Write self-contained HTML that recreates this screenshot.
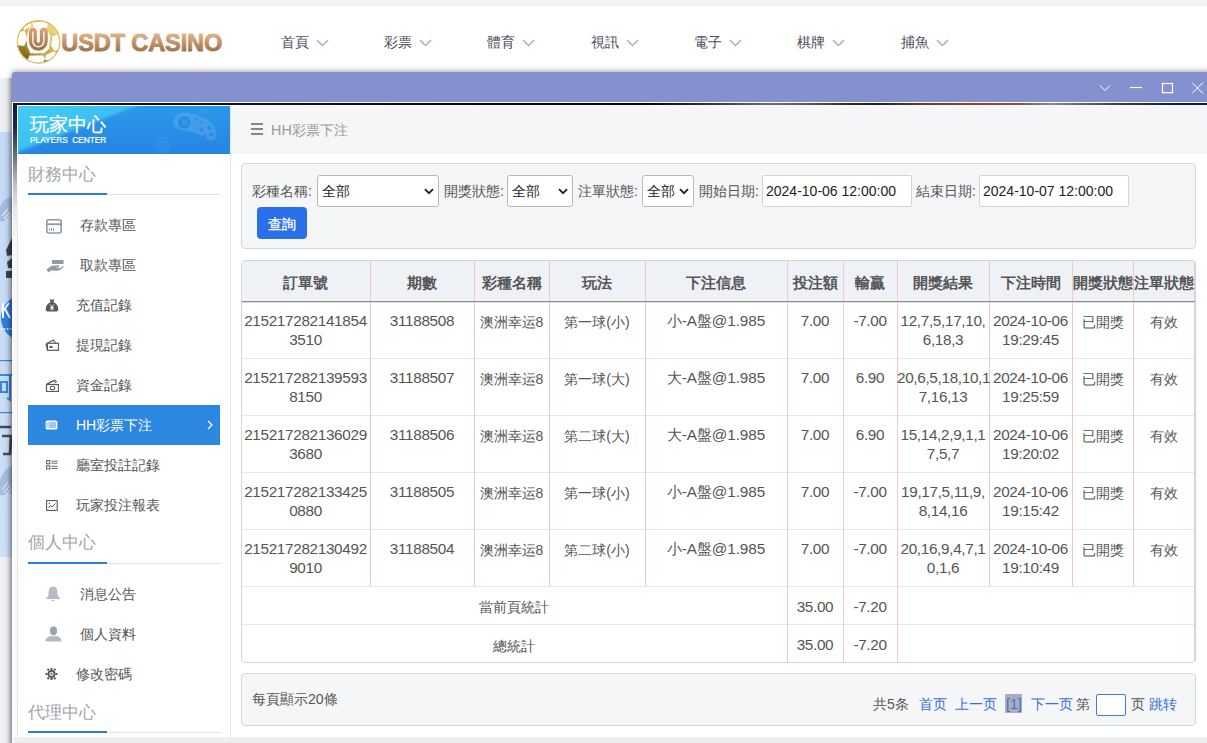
<!DOCTYPE html>
<html><head><meta charset="utf-8">
<style>
*{box-sizing:border-box;margin:0;padding:0}
html,body{width:1207px;height:743px;overflow:hidden;background:#f0f2f5;font-family:"Liberation Sans",sans-serif;color:#555}
.abs{position:absolute}
#top{left:0;top:0;width:1207px;height:6px;background:#f3f3f3}
#hdr{left:0;top:6px;width:1207px;height:72px;background:#fff;box-shadow:0 1px 3px rgba(0,0,0,.08)}
.nav{position:absolute;top:34px;font-size:14px;color:#4d4b5c;white-space:nowrap;line-height:16px}
.nav svg{position:absolute;left:35px;top:5px}
#bgl{left:0;top:78px;width:12px;height:665px;background:#f0f2f5}
#modal{left:12px;top:72px;width:1200px;height:680px;background:#fff;border-radius:2px 0 0 0;box-shadow:0 0 6px rgba(0,0,0,.48)}
#title{left:0;top:0;width:1200px;height:30px;background:#8591cf;border-radius:2px 0 0 0}
#frameTop{left:1px;top:31px;width:1200px;height:2px;background:linear-gradient(90deg,#0b1630 0px,#0a0f1c 287px,#050505 637px,#3c3c3c 707px,#707070 757px,#5a4a40 807px,#3a2414 837px,#0e2a2c 867px,#6a3c1e 907px,#8a4a22 967px,#7a5a48 1007px,#8a8a8a 1037px,#3a3a3a 1107px,#0a1e48 1167px,#0a2050 1207px)}
#frameLeft{left:1px;top:31px;width:4px;height:640px;background:linear-gradient(180deg,#0b1a3a 0%,#1d2b48 25px,#6e7686 55px,#b9bcc3 80px,#e6e6e8 105px,#f8f8f8 135px,#fafafa 100%)}
#frameLine{left:5px;top:33px;width:1px;height:640px;background:linear-gradient(180deg,#fff 0%,#fff 80px,#e4e4e4 130px,#e4e4e4 100%)}
#side{left:6px;top:34px;width:212px;height:631px;background:#fff}
#sideBorder{left:218px;top:33px;width:1px;height:632px;background:#e4e7ed}
#sh{left:0;top:0;width:212px;height:48px;background:linear-gradient(160deg,#43cdf3 0%,#35b2ee 25%,#2a95e8 55%,#2a86e2 100%)}
.sec{position:absolute;left:10px;width:192px;height:40px}
.sec .t{position:absolute;left:0;top:0;font-size:17px;color:#a4a4a4;line-height:20px}
.sec .ul{position:absolute;left:0;top:26px;width:192px;height:1px;background:#e2e2e2}
.sec .ulb{position:absolute;left:0;top:25px;width:79px;height:2px;background:#2a7de1}
.mi{position:absolute;left:10px;width:192px;height:40px;font-size:14px;color:#555;line-height:40px}
.mi .tx{position:absolute;top:0}
.mi svg{position:absolute}
.mi.act{background:#2c87e1;color:#fff}
#content{left:219px;top:33px;width:990px;height:632px;background:#fff}
#bc{left:0;top:0;width:990px;height:49px;background:#f5f6f8}
.card{position:absolute;background:#f5f6f8;border:1px solid #d8dbe0;border-radius:4px}
.lbl{position:absolute;font-size:14px;color:#555;line-height:16px;white-space:nowrap}
.sel{position:absolute;height:32px;background:#fff;border:1px solid #bdbdbd;border-radius:3px;font-size:14px;color:#222;line-height:30px;padding-left:4px;white-space:nowrap}
.sel svg{position:absolute;top:12px}
.inp{position:absolute;height:32px;background:#fff;border:1px solid #d4d4d4;border-radius:2px;font-size:14px;color:#222;line-height:30px;padding-left:4px;white-space:nowrap}
#btn{left:25px;top:44px;width:50px;height:32px;background:#2e71e8;border-radius:4px;color:#fff;font-size:14px;line-height:32px;text-align:center}
#tbl{left:10px;top:227px;width:955px;height:403px;border:1px solid #d8dbe0;border-radius:4px;overflow:hidden;background:#fff}
.pg{position:absolute;font-size:14px;line-height:16px;white-space:nowrap}
.bl{color:#3b6fd6}
#bottom{left:13px;top:737px;width:1194px;height:6px;background:#eeeeee}
</style></head><body>
<div id="top" class="abs"></div>
<div id="hdr" class="abs"></div>
<svg class="abs" style="left:14px;top:18px" width="50" height="50" viewBox="0 0 50 50">
<defs>
<linearGradient id="gold" x1="0.8" y1="0.1" x2="0.2" y2="0.9"><stop offset="0" stop-color="#efdc86"/><stop offset=".5" stop-color="#d2b34e"/><stop offset="1" stop-color="#7a5f1c"/></linearGradient>
<linearGradient id="brn" x1="0" y1="0" x2="0" y2="1"><stop offset="0" stop-color="#d9a987"/><stop offset="1" stop-color="#a97c58"/></linearGradient>
<clipPath id="cc"><circle cx="24.6" cy="23.8" r="21.6"/></clipPath>
</defs>
<circle cx="24.6" cy="23.8" r="21.6" fill="url(#gold)"/>
<g clip-path="url(#cc)" fill="#fffdf6">
<polygon points="18.2,4.4 33,3.7 33.7,9.1 26.9,11.1 19.5,9.8"/>
<polygon points="4,14.5 10.8,12.5 13.5,21.2 10.1,28 4,27.3 2,21.2"/>
<polygon points="38.4,18.5 43.8,16.5 47.5,22.6 46.8,31.3 40.4,32.7 37,27.3"/>
<polygon points="15.5,37.5 29.3,36.7 30.8,40.7 27.9,46.8 15.2,46.8 13.6,42.1"/>
<polygon points="31.6,36.7 40.4,33.3 43.1,36.7 37.7,42.8 31,42.1"/>
<polygon points="8.75,9.1 16.8,5.1 17.5,7.75 10.1,12.5"/>
<polygon points="15.5,9.1 31.6,8.5 36.4,17.9 35,30.6 30.3,35.4 16.5,35.4 13.2,28 13.2,15.8"/>
</g>
<circle cx="24.6" cy="23.8" r="21.2" fill="none" stroke="#d6bd62" stroke-width="1.1"/>
<linearGradient id="brn2" gradientUnits="userSpaceOnUse" x1="0" y1="9.8" x2="0" y2="32.8"><stop offset="0" stop-color="#dba57b"/><stop offset="1" stop-color="#9a6f48"/></linearGradient>
<path d="M18.9 13.8 V23.35 A5.45 5.45 0 0 0 29.8 23.35 V13.8" fill="none" stroke="url(#brn2)" stroke-width="7.9" stroke-linecap="round"/>
<path d="M18.9 13.5 V23.35 A5.45 5.45 0 0 0 29.8 23.35 V13.5" fill="none" stroke="#fbf3ea" stroke-width="1.5"/>
<text x="24.5" y="37.5" font-family="Liberation Sans" font-size="5" font-weight="700" fill="#c4a384" text-anchor="middle">casino</text>
</svg>
<svg class="abs" id="brand" style="left:58px;top:28px" width="175" height="28" viewBox="0 0 175 28"><defs><linearGradient id="bg1" gradientUnits="userSpaceOnUse" x1="0" y1="6" x2="0" y2="23"><stop offset="0" stop-color="#dfb28a"/><stop offset="0.5" stop-color="#c39268"/><stop offset="1" stop-color="#9f744d"/></linearGradient></defs><text x="3.3" y="23" font-family="Liberation Sans" font-weight="700" font-size="23.6" letter-spacing="-0.15" fill="url(#bg1)" stroke="url(#bg1)" stroke-width="0.9">USDT CASINO</text></svg>
<div class="nav" style="left:281px">首頁<svg width="13" height="8" viewBox="0 0 13 8"><path d="M1 1.2 L6.5 6.5 L12 1.2" fill="none" stroke="#a9b4d2" stroke-width="1.6"/></svg></div><div class="nav" style="left:384px">彩票<svg width="13" height="8" viewBox="0 0 13 8"><path d="M1 1.2 L6.5 6.5 L12 1.2" fill="none" stroke="#a9b4d2" stroke-width="1.6"/></svg></div><div class="nav" style="left:487px">體育<svg width="13" height="8" viewBox="0 0 13 8"><path d="M1 1.2 L6.5 6.5 L12 1.2" fill="none" stroke="#a9b4d2" stroke-width="1.6"/></svg></div><div class="nav" style="left:591px">視訊<svg width="13" height="8" viewBox="0 0 13 8"><path d="M1 1.2 L6.5 6.5 L12 1.2" fill="none" stroke="#a9b4d2" stroke-width="1.6"/></svg></div><div class="nav" style="left:694px">電子<svg width="13" height="8" viewBox="0 0 13 8"><path d="M1 1.2 L6.5 6.5 L12 1.2" fill="none" stroke="#a9b4d2" stroke-width="1.6"/></svg></div><div class="nav" style="left:797px">棋牌<svg width="13" height="8" viewBox="0 0 13 8"><path d="M1 1.2 L6.5 6.5 L12 1.2" fill="none" stroke="#a9b4d2" stroke-width="1.6"/></svg></div><div class="nav" style="left:901px">捕魚<svg width="13" height="8" viewBox="0 0 13 8"><path d="M1 1.2 L6.5 6.5 L12 1.2" fill="none" stroke="#a9b4d2" stroke-width="1.6"/></svg></div>
<div id="bgl" class="abs"></div>
<svg class="abs" style="left:0;top:78px" width="12" height="665" viewBox="0 78 12 665">
<defs>
<linearGradient id="lbg" x1="0" y1="0" x2="0" y2="1"><stop offset="0" stop-color="#c4daf6"/><stop offset="1" stop-color="#cfe1f8"/></linearGradient>
<linearGradient id="shd" x1="0" y1="0" x2="1" y2="0"><stop offset="0" stop-color="#000" stop-opacity="0"/><stop offset="0.6" stop-color="#000" stop-opacity="0.03"/><stop offset="1" stop-color="#000" stop-opacity="0.22"/></linearGradient>
</defs>
<rect x="0" y="78" width="12" height="54" fill="#eef0f4"/>
<rect x="0" y="132" width="12" height="425" fill="url(#lbg)"/>
<rect x="0" y="557" width="12" height="186" fill="#f0f2f6"/>
<g fill="#9db8de" opacity="0.85">
<path d="M0 206 Q4 198 12 197 L12 218 Q6 222 0 221 Z"/>
<path d="M0 480 Q4 468 12 466 L12 492 Q6 496 0 495 Z"/>
</g>
<g stroke="#eaf2fc" stroke-width="1.2" opacity="0.9">
<path d="M2 216 L8 209 M4 219 L10 212 M6 221 L12 214"/>
<path d="M2 490 L8 482 M4 493 L10 485 M6 495 L12 488"/>
</g>
<g fill="#3e4552">
<path d="M12 238 L6 250 L7 256 L12 255 Z"/>
<path d="M12 258 L7 262 L8 268 L12 268 Z"/>
<rect x="6" y="271" width="6" height="7"/>
</g>
<circle cx="24" cy="318" r="23" fill="#2f80e0"/>
<path d="M3 303 V318 M3 311 L9 303 M5 309 L10 318" stroke="#fff" stroke-width="2" fill="none"/>
<path d="M1 329 H12" stroke="#fff" stroke-width="1.5" stroke-dasharray="1.5 1.5"/>
<rect x="0" y="360" width="12" height="1.2" fill="#3b86e0"/>
<rect x="0" y="412" width="12" height="1.2" fill="#3b86e0"/>
<path d="M0 375 H12 M10 375 V400 L7 398 M1 382 H7 V392 H1 Z" fill="none" stroke="#3b86e0" stroke-width="2"/>
<path d="M0 427 H11 M2 436 H11 L10 454 H3" fill="none" stroke="#444b56" stroke-width="2.6"/>
<rect x="0" y="78" width="12" height="665" fill="url(#shd)"/>
</svg>

<div id="modal" class="abs">
  <div id="title" class="abs"><svg class="abs" style="left:1087px;top:10px" width="120" height="14" viewBox="0 0 120 14">
<path d="M0.8 3.3 L6 8.5 L11.2 3.3" fill="none" stroke="#fff" stroke-width="1"/>
<path d="M31 5.5 H43" stroke="#fff" stroke-width="1.2"/>
<rect x="63.5" y="1.5" width="10" height="9.2" fill="none" stroke="#fff" stroke-width="1.2"/>
<path d="M93 0.5 L104 11.5 M104 0.5 L93 11.5" stroke="#fff" stroke-width="1"/>
</svg></div>
  <div id="frameTop" class="abs"></div>
  <div id="frameLeft" class="abs"></div><div id="frameLine" class="abs"></div>
  <div id="side" class="abs">
    <svg id="sh" class="abs" width="212" height="48" viewBox="0 0 212 48" style="background:none">
<defs>
<linearGradient id="shb" x1="0" y1="0" x2="0" y2="1"><stop offset="0" stop-color="#2b98ea"/><stop offset="1" stop-color="#2585e2"/></linearGradient>
<linearGradient id="shc" x1="0" y1="0" x2="1" y2="1"><stop offset="0" stop-color="#45cef4"/><stop offset="1" stop-color="#34b0ee"/></linearGradient>
<filter id="bl1" x="-20%" y="-20%" width="140%" height="140%"><feGaussianBlur stdDeviation="1.6"/></filter>
</defs>
<rect width="212" height="48" fill="url(#shb)"/>
<polygon points="-6,-6 122,-6 118,0 0,46 -6,52" fill="url(#shc)" filter="url(#bl1)"/>
<g opacity="0.12" fill="#fff">
<path d="M157 12 Q162 5 172 7 L186 12 Q196 16 198 26 Q199 33 194 34 Q188 34 182 29 L170 25 Q160 24 156 20 Q154 16 157 12 Z"/>
<path d="M182 7 Q185 3 189 4 Q186 7 188 8" stroke="#fff" fill="none" stroke-width="1"/>
<circle cx="144.5" cy="39" r="8.5" opacity="0.3"/>
</g>
<circle cx="166.3" cy="16.2" r="6.3" fill="#1e7cdc" opacity="0.6"/>
<path d="M163.3 13.2 L169.3 19.2 M169.3 13.2 L163.3 19.2" stroke="#3c9fec" stroke-width="1.6" opacity="0.8"/>
<g fill="#1e7cdc" opacity="0.5"><circle cx="183.7" cy="24" r="2.1"/><circle cx="191.4" cy="21.9" r="2.1"/><circle cx="186.4" cy="30.4" r="2.1"/><circle cx="193.2" cy="28.5" r="2.1"/></g>
<path d="M176.5 12 L179.5 13.8 M181.5 15.2 L184.5 17" stroke="#1e7cdc" stroke-width="1.5" opacity="0.5"/>
</svg>
<div class="abs" style="left:12px;top:9px;font-size:19px;color:#fff;line-height:20px;white-space:nowrap;-webkit-text-stroke:0.25px #fff">玩家中心</div><div class="abs" style="left:12px;top:29px;font-size:8.4px;color:#fff;line-height:10px;letter-spacing:-0.05px;-webkit-text-stroke:0.2px #fff;white-space:nowrap">PLAYERS&nbsp; CENTER</div><div class="abs" style="left:10px;top:59px;font-size:17px;color:#a2a6ab;line-height:20px;white-space:nowrap">財務中心</div><div class="abs" style="left:10px;top:88px;width:192px;height:1px;background:#e2e2e2"></div><div class="abs" style="left:10px;top:87px;width:79px;height:2px;background:#2a7de1"></div><div class="abs" style="left:10px;top:427px;font-size:17px;color:#a2a6ab;line-height:20px;white-space:nowrap">個人中心</div><div class="abs" style="left:10px;top:457px;width:192px;height:1px;background:#e2e2e2"></div><div class="abs" style="left:10px;top:456px;width:79px;height:2px;background:#2a7de1"></div><div class="abs" style="left:10px;top:597px;font-size:17px;color:#a2a6ab;line-height:20px;white-space:nowrap">代理中心</div><div class="abs" style="left:10px;top:626px;width:192px;height:1px;background:#e2e2e2"></div><div class="abs" style="left:10px;top:625px;width:79px;height:2px;background:#2a7de1"></div><div class="abs" style="left:62px;top:99px;font-size:14px;line-height:40px;color:#555;white-space:nowrap">存款專區</div><div class="abs" style="left:28px;top:112.5px;line-height:0"><svg width="16" height="15" viewBox="0 0 16 15"><rect x="0.8" y="0.8" width="14.4" height="13.2" rx="2" fill="none" stroke="#8f9aa3" stroke-width="1.6"/><rect x="0.8" y="4.3" width="14.4" height="1.8" fill="#8f9aa3"/><path d="M3.5 9.2v2.6M5.5 9.2v2.6M7.5 9.2v2.6" stroke="#8f9aa3" stroke-width="1"/></svg></div><div class="abs" style="left:62px;top:139px;font-size:14px;line-height:40px;color:#555;white-space:nowrap">取款專區</div><div class="abs" style="left:26.5px;top:154px;line-height:0"><svg width="19" height="13" viewBox="0 0 19 13"><rect x="7" y="0" width="11.5" height="4" fill="#8f9aa3"/><path d="M1.5 9.5 L5.5 6.5 Q7 5.5 9 5.5 L14 5.5 Q15 6.3 14 7.2 L10 7.6 L15 8.2 L18.5 5.8 Q18.8 6.8 18 7.6 L15 10 Q13.5 10.8 11.5 10.8 L6 10.6 L3.5 12.5 Z" fill="#8f9aa3"/></svg></div><div class="abs" style="left:58px;top:179px;font-size:14px;line-height:40px;color:#555;white-space:nowrap">充值記錄</div><div class="abs" style="left:27px;top:192.5px;line-height:0"><svg width="14" height="13" viewBox="0 0 14 13"><path d="M4.5 0.5 L9.5 0.5 L8.3 3 Q13 5 13.3 10 Q13.3 12.6 10.5 12.6 L3.5 12.6 Q0.7 12.6 0.7 10 Q1 5 5.7 3 Z" fill="#5a5a5a"/><path d="M5 5.5 L7 8 L9 5.5 M7 8 V11 M5.3 8.5 H8.7 M5.3 10 H8.7" stroke="#fff" stroke-width="0.9" fill="none"/></svg></div><div class="abs" style="left:58px;top:219px;font-size:14px;line-height:40px;color:#555;white-space:nowrap">提現記錄</div><div class="abs" style="left:27px;top:232.5px;line-height:0"><svg width="14" height="12" viewBox="0 0 14 12"><path d="M1 5 L8.5 1 L10.5 4" fill="none" stroke="#5a5a5a" stroke-width="1.1"/><rect x="2.5" y="4.3" width="11" height="7" fill="none" stroke="#5a5a5a" stroke-width="1.2"/><rect x="4.5" y="7" width="3" height="2" fill="#5a5a5a"/><path d="M1 5 L2.5 11.3" stroke="#5a5a5a" stroke-width="1.1"/></svg></div><div class="abs" style="left:58px;top:259px;font-size:14px;line-height:40px;color:#555;white-space:nowrap">資金記錄</div><div class="abs" style="left:27px;top:272.5px;line-height:0"><svg width="14" height="13" viewBox="0 0 14 13"><path d="M1 6 L9 1.5 L11 4" fill="none" stroke="#5a5a5a" stroke-width="1.1"/><path d="M1.5 4.8 L10 1 L12 3" fill="none" stroke="#5a5a5a" stroke-width="0.9"/><rect x="1.5" y="5.5" width="12" height="7" fill="none" stroke="#5a5a5a" stroke-width="1.2"/><ellipse cx="7.5" cy="9" rx="2.2" ry="1.8" fill="none" stroke="#5a5a5a" stroke-width="1.1"/></svg></div><div class="abs" style="left:10px;top:299px;width:192px;height:40px;background:#2c87e1"></div><svg class="abs" style="left:189px;top:314px" width="7" height="10" viewBox="0 0 7 10"><path d="M1 1 L5 5 L1 9" fill="none" stroke="#fff" stroke-width="1.2"/></svg><div class="abs" style="left:58px;top:299px;font-size:14px;line-height:40px;color:#fff;white-space:nowrap">HH彩票下注</div><div class="abs" style="left:27px;top:314px;line-height:0"><svg width="13" height="10" viewBox="0 0 13 10"><rect x="0.6" y="0.6" width="11.8" height="8.8" rx="1.5" fill="#fff"/><path d="M3.5 3 H11 M3.5 5 H11 M3.5 7 H11" stroke="#2c87e1" stroke-width="0.9"/><path d="M2 2.5 V7.5" stroke="#2c87e1" stroke-width="0.6"/></svg></div><div class="abs" style="left:58px;top:339px;font-size:14px;line-height:40px;color:#555;white-space:nowrap">廳室投註記錄</div><div class="abs" style="left:28px;top:354px;line-height:0"><svg width="12" height="10" viewBox="0 0 12 10"><rect x="0.6" y="0.6" width="3.2" height="3.2" fill="none" stroke="#5a5a5a" stroke-width="1"/><rect x="0.6" y="5.8" width="3.2" height="3.2" fill="none" stroke="#5a5a5a" stroke-width="1"/><path d="M5.5 1.2 H11.5 M5.5 3.2 H11.5 M5.5 6.3 H11.5 M5.5 8.5 H11.5" stroke="#5a5a5a" stroke-width="0.9"/></svg></div><div class="abs" style="left:58px;top:379px;font-size:14px;line-height:40px;color:#555;white-space:nowrap">玩家投注報表</div><div class="abs" style="left:28px;top:393.5px;line-height:0"><svg width="12" height="11" viewBox="0 0 12 11"><rect x="0.6" y="0.6" width="10.6" height="9.8" fill="none" stroke="#5a5a5a" stroke-width="1.1"/><path d="M2.5 8 L4.5 5.5 L6 7 L9.5 3.5" fill="none" stroke="#5a5a5a" stroke-width="1"/><circle cx="3.3" cy="3.3" r="0.8" fill="#5a5a5a"/></svg></div><div class="abs" style="left:62px;top:468px;font-size:14px;line-height:40px;color:#555;white-space:nowrap">消息公告</div><div class="abs" style="left:26.5px;top:479.5px;line-height:0"><svg width="16" height="16" viewBox="0 0 16 16"><path d="M8 0.5 Q12 0.5 12.3 5 L12.5 9.5 L15.5 13 L0.5 13 L3.5 9.5 L3.7 5 Q4 0.5 8 0.5 Z" fill="#b5bcc3"/><path d="M6.5 14.5 H9.5" stroke="#b5bcc3" stroke-width="1.2"/></svg></div><div class="abs" style="left:62px;top:508px;font-size:14px;line-height:40px;color:#555;white-space:nowrap">個人資料</div><div class="abs" style="left:27px;top:519.5px;line-height:0"><svg width="17" height="16" viewBox="0 0 17 16"><ellipse cx="8.5" cy="4.8" rx="3.6" ry="4.4" fill="#9aa3ab"/><path d="M0.5 15.5 Q0.7 11.5 4 10.6 L6.5 9.8 Q8.5 11 10.5 9.8 L13 10.6 Q16.3 11.5 16.5 15.5 Z" fill="#b3bac1"/></svg></div><div class="abs" style="left:58px;top:548px;font-size:14px;line-height:40px;color:#555;white-space:nowrap">修改密碼</div><div class="abs" style="left:27px;top:562px;line-height:0"><svg width="13" height="12" viewBox="0 0 13 12"><g fill="#5a5a5a"><circle cx="6.5" cy="6" r="4"/><path d="M5.5 0 H7.5 V2 H5.5Z M5.5 10 H7.5 V12 H5.5Z M0.5 5 V7 H2.5 V5Z M10.5 5 V7 H12.5 V5Z"/><path d="M1.8 1.5 L3.2 0.2 L4.6 1.6 L3.2 3Z M8.4 10.4 L9.8 9 L11.2 10.4 L9.8 11.8Z M1.8 10.5 L3.2 9 L4.6 10.4 L3.2 11.8Z M8.4 1.6 L9.8 0.2 L11.2 1.6 L9.8 3Z"/></g><circle cx="6.5" cy="6" r="2.1" fill="#fff"/><circle cx="6.5" cy="6" r="1" fill="#5a5a5a"/></svg></div>
  </div>
  <div id="sideBorder" class="abs"></div>
  <div id="content" class="abs">
    <div id="bc" class="abs"></div>
  </div>
</div>
<!--CONTENT-->
<svg class="abs" style="left:251px;top:123px" width="13" height="13" viewBox="0 0 13 13"><path d="M0 1 H12 M0 6 H12 M0 11 H12" stroke="#878787" stroke-width="1.9"/></svg>
<div class="abs" style="left:271px;top:121px;font-size:14.4px;line-height:18.4px;color:#999;font-weight:400;white-space:nowrap;">HH彩票下注</div>
<div class="abs" style="left:241px;top:163px;width:955px;height:86px;background:#f5f6f8;border:1px solid #d3d7dc;border-radius:4px"></div>
<div class="abs" style="left:252px;top:182px;font-size:14px;line-height:18px;color:#555;font-weight:400;white-space:nowrap;">彩種名稱:</div>
<div class="abs" style="left:317px;top:175px;width:122px;height:32px;background:#fff;border:1px solid #b9b9b9;border-radius:3px"></div><div class="abs" style="left:322px;top:182px;font-size:14px;line-height:18px;color:#222;font-weight:400;white-space:nowrap;">全部</div><svg class="abs" style="left:424px;top:188px" width="10" height="7" viewBox="0 0 10 7"><path d="M1 1.2 L5 5.2 L9 1.2" fill="none" stroke="#222" stroke-width="1.8"/></svg>
<div class="abs" style="left:444px;top:182px;font-size:14px;line-height:18px;color:#555;font-weight:400;white-space:nowrap;">開獎狀態:</div>
<div class="abs" style="left:507px;top:175px;width:66px;height:32px;background:#fff;border:1px solid #b9b9b9;border-radius:3px"></div><div class="abs" style="left:512px;top:182px;font-size:14px;line-height:18px;color:#222;font-weight:400;white-space:nowrap;">全部</div><svg class="abs" style="left:558px;top:188px" width="10" height="7" viewBox="0 0 10 7"><path d="M1 1.2 L5 5.2 L9 1.2" fill="none" stroke="#222" stroke-width="1.8"/></svg>
<div class="abs" style="left:578px;top:182px;font-size:14px;line-height:18px;color:#555;font-weight:400;white-space:nowrap;">注單狀態:</div>
<div class="abs" style="left:642px;top:175px;width:52px;height:32px;background:#fff;border:1px solid #b9b9b9;border-radius:3px"></div><div class="abs" style="left:647px;top:182px;font-size:14px;line-height:18px;color:#222;font-weight:400;white-space:nowrap;">全部</div><svg class="abs" style="left:679px;top:188px" width="10" height="7" viewBox="0 0 10 7"><path d="M1 1.2 L5 5.2 L9 1.2" fill="none" stroke="#222" stroke-width="1.8"/></svg>
<div class="abs" style="left:699px;top:182px;font-size:14px;line-height:18px;color:#555;font-weight:400;white-space:nowrap;">開始日期:</div>
<div class="abs" style="left:762px;top:175px;width:150px;height:32px;background:#fff;border:1px solid #d4d4d4;border-radius:2px"></div><div class="abs" style="left:766px;top:182px;font-size:14px;line-height:18px;color:#222;font-weight:400;white-space:nowrap;">2024-10-06 12:00:00</div>
<div class="abs" style="left:916px;top:182px;font-size:14px;line-height:18px;color:#555;font-weight:400;white-space:nowrap;">結束日期:</div>
<div class="abs" style="left:979px;top:175px;width:150px;height:32px;background:#fff;border:1px solid #d4d4d4;border-radius:2px"></div><div class="abs" style="left:983px;top:182px;font-size:14px;line-height:18px;color:#222;font-weight:400;white-space:nowrap;">2024-10-07 12:00:00</div>
<div class="abs" style="left:257px;top:207px;width:50px;height:32px;background:#2b70eb;border-radius:4px"></div>
<div class="abs" style="left:257px;top:214.5px;width:50px;text-align:center;font-size:14px;line-height:18px;color:#fff;font-weight:400;white-space:nowrap;-webkit-text-stroke:0.3px #fff;">查詢</div>
<div class="abs" style="left:241px;top:260px;width:955px;height:403px;background:#fff;border:1px solid #d3d7dc;border-radius:4px;overflow:hidden"><div class="abs" style="left:0;top:0;width:955px;height:41px;background:#eef1f5"></div><div class="abs" style="left:0;top:40px;width:955px;height:1px;background:#958d8c"></div><div class="abs" style="left:0;top:41px;width:955px;height:1px;background:#ddd9d9"></div></div>
<div class="abs" style="left:242px;top:358px;width:953px;height:1px;background:#e6e6e6"></div>
<div class="abs" style="left:242px;top:415px;width:953px;height:1px;background:#e6e6e6"></div>
<div class="abs" style="left:242px;top:472px;width:953px;height:1px;background:#e6e6e6"></div>
<div class="abs" style="left:242px;top:529px;width:953px;height:1px;background:#e6e6e6"></div>
<div class="abs" style="left:242px;top:586px;width:953px;height:1px;background:#e6e6e6"></div>
<div class="abs" style="left:242px;top:624px;width:953px;height:1px;background:#e6e6e6"></div>
<div class="abs" style="left:370px;top:261px;width:1px;height:325px;background:#f0caca"></div>
<div class="abs" style="left:474px;top:261px;width:1px;height:325px;background:#f0caca"></div>
<div class="abs" style="left:549px;top:261px;width:1px;height:325px;background:#f0caca"></div>
<div class="abs" style="left:645px;top:261px;width:1px;height:325px;background:#f0caca"></div>
<div class="abs" style="left:787px;top:261px;width:1px;height:401px;background:#f0caca"></div>
<div class="abs" style="left:843px;top:261px;width:1px;height:401px;background:#f0caca"></div>
<div class="abs" style="left:897px;top:261px;width:1px;height:401px;background:#f0caca"></div>
<div class="abs" style="left:989px;top:261px;width:1px;height:325px;background:#f0caca"></div>
<div class="abs" style="left:1072px;top:261px;width:1px;height:325px;background:#f0caca"></div>
<div class="abs" style="left:1133px;top:261px;width:1px;height:325px;background:#f0caca"></div>
<div class="abs" style="left:1194px;top:261px;width:1px;height:401px;background:#f0caca"></div>
<div class="abs" style="left:242px;top:301px;width:953px;height:1px;background:#958d8c"></div><div class="abs" style="left:242px;top:302px;width:953px;height:1px;background:#ddd9d9"></div>
<div class="abs" style="left:241px;top:273px;width:129px;text-align:center;font-size:15px;line-height:20px;color:#555;font-weight:700;white-space:nowrap;">訂單號</div>
<div class="abs" style="left:370px;top:273px;width:104px;text-align:center;font-size:15px;line-height:20px;color:#555;font-weight:700;white-space:nowrap;">期數</div>
<div class="abs" style="left:474px;top:273px;width:75px;text-align:center;font-size:15px;line-height:20px;color:#555;font-weight:700;white-space:nowrap;">彩種名稱</div>
<div class="abs" style="left:549px;top:273px;width:96px;text-align:center;font-size:15px;line-height:20px;color:#555;font-weight:700;white-space:nowrap;">玩法</div>
<div class="abs" style="left:645px;top:273px;width:142px;text-align:center;font-size:15px;line-height:20px;color:#555;font-weight:700;white-space:nowrap;">下注信息</div>
<div class="abs" style="left:787px;top:273px;width:56px;text-align:center;font-size:15px;line-height:20px;color:#555;font-weight:700;white-space:nowrap;">投注額</div>
<div class="abs" style="left:843px;top:273px;width:54px;text-align:center;font-size:15px;line-height:20px;color:#555;font-weight:700;white-space:nowrap;">輸贏</div>
<div class="abs" style="left:897px;top:273px;width:92px;text-align:center;font-size:15px;line-height:20px;color:#555;font-weight:700;white-space:nowrap;">開獎結果</div>
<div class="abs" style="left:989px;top:273px;width:83px;text-align:center;font-size:15px;line-height:20px;color:#555;font-weight:700;white-space:nowrap;">下注時間</div>
<div class="abs" style="left:1072px;top:273px;width:61px;text-align:center;font-size:15px;line-height:20px;color:#555;font-weight:700;white-space:nowrap;">開獎狀態</div>
<div class="abs" style="left:1133px;top:273px;width:62px;text-align:center;font-size:15px;line-height:20px;color:#555;font-weight:700;white-space:nowrap;">注單狀態</div>
<div class="abs" style="left:241px;top:311px;width:129px;text-align:center;font-size:15.3px;line-height:19px;color:#555;font-weight:400;white-space:nowrap;letter-spacing:-0.33px;">215217282141854<br>3510</div>
<div class="abs" style="left:370px;top:311px;width:104px;text-align:center;font-size:15.3px;line-height:19px;color:#555;font-weight:400;white-space:nowrap;letter-spacing:-0.33px;">31188508</div>
<div class="abs" style="left:474px;top:313px;width:75px;text-align:center;font-size:14px;line-height:19px;color:#555;font-weight:400;white-space:nowrap;">澳洲幸运8</div>
<div class="abs" style="left:549px;top:313px;width:96px;text-align:center;font-size:14px;line-height:19px;color:#555;font-weight:400;white-space:nowrap;">第一球(小)</div>
<div class="abs" style="left:645px;top:311px;width:142px;text-align:center;font-size:15.3px;line-height:19px;color:#555;font-weight:400;white-space:nowrap;letter-spacing:-0.1px;">小-A盤@1.985</div>
<div class="abs" style="left:787px;top:311px;width:56px;text-align:center;font-size:15.3px;line-height:19px;color:#555;font-weight:400;white-space:nowrap;letter-spacing:-0.33px;">7.00</div>
<div class="abs" style="left:843px;top:311px;width:54px;text-align:center;font-size:15.3px;line-height:19px;color:#555;font-weight:400;white-space:nowrap;letter-spacing:-0.33px;">-7.00</div>
<div class="abs" style="left:897px;top:311px;width:92px;text-align:center;font-size:15.3px;line-height:19px;color:#555;font-weight:400;white-space:nowrap;letter-spacing:-0.33px;">12,7,5,17,10,<br>6,18,3</div>
<div class="abs" style="left:989px;top:311px;width:83px;text-align:center;font-size:15.3px;line-height:19px;color:#555;font-weight:400;white-space:nowrap;letter-spacing:-0.33px;">2024-10-06<br>19:29:45</div>
<div class="abs" style="left:1072px;top:313px;width:61px;text-align:center;font-size:14px;line-height:19px;color:#555;font-weight:400;white-space:nowrap;">已開獎</div>
<div class="abs" style="left:1133px;top:313px;width:62px;text-align:center;font-size:14px;line-height:19px;color:#555;font-weight:400;white-space:nowrap;">有效</div>
<div class="abs" style="left:241px;top:368px;width:129px;text-align:center;font-size:15.3px;line-height:19px;color:#555;font-weight:400;white-space:nowrap;letter-spacing:-0.33px;">215217282139593<br>8150</div>
<div class="abs" style="left:370px;top:368px;width:104px;text-align:center;font-size:15.3px;line-height:19px;color:#555;font-weight:400;white-space:nowrap;letter-spacing:-0.33px;">31188507</div>
<div class="abs" style="left:474px;top:370px;width:75px;text-align:center;font-size:14px;line-height:19px;color:#555;font-weight:400;white-space:nowrap;">澳洲幸运8</div>
<div class="abs" style="left:549px;top:370px;width:96px;text-align:center;font-size:14px;line-height:19px;color:#555;font-weight:400;white-space:nowrap;">第一球(大)</div>
<div class="abs" style="left:645px;top:368px;width:142px;text-align:center;font-size:15.3px;line-height:19px;color:#555;font-weight:400;white-space:nowrap;letter-spacing:-0.1px;">大-A盤@1.985</div>
<div class="abs" style="left:787px;top:368px;width:56px;text-align:center;font-size:15.3px;line-height:19px;color:#555;font-weight:400;white-space:nowrap;letter-spacing:-0.33px;">7.00</div>
<div class="abs" style="left:843px;top:368px;width:54px;text-align:center;font-size:15.3px;line-height:19px;color:#555;font-weight:400;white-space:nowrap;letter-spacing:-0.33px;">6.90</div>
<div class="abs" style="left:897px;top:368px;width:92px;text-align:center;font-size:15.3px;line-height:19px;color:#555;font-weight:400;white-space:nowrap;letter-spacing:-0.33px;">20,6,5,18,10,1<br>7,16,13</div>
<div class="abs" style="left:989px;top:368px;width:83px;text-align:center;font-size:15.3px;line-height:19px;color:#555;font-weight:400;white-space:nowrap;letter-spacing:-0.33px;">2024-10-06<br>19:25:59</div>
<div class="abs" style="left:1072px;top:370px;width:61px;text-align:center;font-size:14px;line-height:19px;color:#555;font-weight:400;white-space:nowrap;">已開獎</div>
<div class="abs" style="left:1133px;top:370px;width:62px;text-align:center;font-size:14px;line-height:19px;color:#555;font-weight:400;white-space:nowrap;">有效</div>
<div class="abs" style="left:241px;top:425px;width:129px;text-align:center;font-size:15.3px;line-height:19px;color:#555;font-weight:400;white-space:nowrap;letter-spacing:-0.33px;">215217282136029<br>3680</div>
<div class="abs" style="left:370px;top:425px;width:104px;text-align:center;font-size:15.3px;line-height:19px;color:#555;font-weight:400;white-space:nowrap;letter-spacing:-0.33px;">31188506</div>
<div class="abs" style="left:474px;top:427px;width:75px;text-align:center;font-size:14px;line-height:19px;color:#555;font-weight:400;white-space:nowrap;">澳洲幸运8</div>
<div class="abs" style="left:549px;top:427px;width:96px;text-align:center;font-size:14px;line-height:19px;color:#555;font-weight:400;white-space:nowrap;">第二球(大)</div>
<div class="abs" style="left:645px;top:425px;width:142px;text-align:center;font-size:15.3px;line-height:19px;color:#555;font-weight:400;white-space:nowrap;letter-spacing:-0.1px;">大-A盤@1.985</div>
<div class="abs" style="left:787px;top:425px;width:56px;text-align:center;font-size:15.3px;line-height:19px;color:#555;font-weight:400;white-space:nowrap;letter-spacing:-0.33px;">7.00</div>
<div class="abs" style="left:843px;top:425px;width:54px;text-align:center;font-size:15.3px;line-height:19px;color:#555;font-weight:400;white-space:nowrap;letter-spacing:-0.33px;">6.90</div>
<div class="abs" style="left:897px;top:425px;width:92px;text-align:center;font-size:15.3px;line-height:19px;color:#555;font-weight:400;white-space:nowrap;letter-spacing:-0.33px;">15,14,2,9,1,1<br>7,5,7</div>
<div class="abs" style="left:989px;top:425px;width:83px;text-align:center;font-size:15.3px;line-height:19px;color:#555;font-weight:400;white-space:nowrap;letter-spacing:-0.33px;">2024-10-06<br>19:20:02</div>
<div class="abs" style="left:1072px;top:427px;width:61px;text-align:center;font-size:14px;line-height:19px;color:#555;font-weight:400;white-space:nowrap;">已開獎</div>
<div class="abs" style="left:1133px;top:427px;width:62px;text-align:center;font-size:14px;line-height:19px;color:#555;font-weight:400;white-space:nowrap;">有效</div>
<div class="abs" style="left:241px;top:482px;width:129px;text-align:center;font-size:15.3px;line-height:19px;color:#555;font-weight:400;white-space:nowrap;letter-spacing:-0.33px;">215217282133425<br>0880</div>
<div class="abs" style="left:370px;top:482px;width:104px;text-align:center;font-size:15.3px;line-height:19px;color:#555;font-weight:400;white-space:nowrap;letter-spacing:-0.33px;">31188505</div>
<div class="abs" style="left:474px;top:484px;width:75px;text-align:center;font-size:14px;line-height:19px;color:#555;font-weight:400;white-space:nowrap;">澳洲幸运8</div>
<div class="abs" style="left:549px;top:484px;width:96px;text-align:center;font-size:14px;line-height:19px;color:#555;font-weight:400;white-space:nowrap;">第一球(小)</div>
<div class="abs" style="left:645px;top:482px;width:142px;text-align:center;font-size:15.3px;line-height:19px;color:#555;font-weight:400;white-space:nowrap;letter-spacing:-0.1px;">小-A盤@1.985</div>
<div class="abs" style="left:787px;top:482px;width:56px;text-align:center;font-size:15.3px;line-height:19px;color:#555;font-weight:400;white-space:nowrap;letter-spacing:-0.33px;">7.00</div>
<div class="abs" style="left:843px;top:482px;width:54px;text-align:center;font-size:15.3px;line-height:19px;color:#555;font-weight:400;white-space:nowrap;letter-spacing:-0.33px;">-7.00</div>
<div class="abs" style="left:897px;top:482px;width:92px;text-align:center;font-size:15.3px;line-height:19px;color:#555;font-weight:400;white-space:nowrap;letter-spacing:-0.33px;">19,17,5,11,9,<br>8,14,16</div>
<div class="abs" style="left:989px;top:482px;width:83px;text-align:center;font-size:15.3px;line-height:19px;color:#555;font-weight:400;white-space:nowrap;letter-spacing:-0.33px;">2024-10-06<br>19:15:42</div>
<div class="abs" style="left:1072px;top:484px;width:61px;text-align:center;font-size:14px;line-height:19px;color:#555;font-weight:400;white-space:nowrap;">已開獎</div>
<div class="abs" style="left:1133px;top:484px;width:62px;text-align:center;font-size:14px;line-height:19px;color:#555;font-weight:400;white-space:nowrap;">有效</div>
<div class="abs" style="left:241px;top:539px;width:129px;text-align:center;font-size:15.3px;line-height:19px;color:#555;font-weight:400;white-space:nowrap;letter-spacing:-0.33px;">215217282130492<br>9010</div>
<div class="abs" style="left:370px;top:539px;width:104px;text-align:center;font-size:15.3px;line-height:19px;color:#555;font-weight:400;white-space:nowrap;letter-spacing:-0.33px;">31188504</div>
<div class="abs" style="left:474px;top:541px;width:75px;text-align:center;font-size:14px;line-height:19px;color:#555;font-weight:400;white-space:nowrap;">澳洲幸运8</div>
<div class="abs" style="left:549px;top:541px;width:96px;text-align:center;font-size:14px;line-height:19px;color:#555;font-weight:400;white-space:nowrap;">第二球(小)</div>
<div class="abs" style="left:645px;top:539px;width:142px;text-align:center;font-size:15.3px;line-height:19px;color:#555;font-weight:400;white-space:nowrap;letter-spacing:-0.1px;">小-A盤@1.985</div>
<div class="abs" style="left:787px;top:539px;width:56px;text-align:center;font-size:15.3px;line-height:19px;color:#555;font-weight:400;white-space:nowrap;letter-spacing:-0.33px;">7.00</div>
<div class="abs" style="left:843px;top:539px;width:54px;text-align:center;font-size:15.3px;line-height:19px;color:#555;font-weight:400;white-space:nowrap;letter-spacing:-0.33px;">-7.00</div>
<div class="abs" style="left:897px;top:539px;width:92px;text-align:center;font-size:15.3px;line-height:19px;color:#555;font-weight:400;white-space:nowrap;letter-spacing:-0.33px;">20,16,9,4,7,1<br>0,1,6</div>
<div class="abs" style="left:989px;top:539px;width:83px;text-align:center;font-size:15.3px;line-height:19px;color:#555;font-weight:400;white-space:nowrap;letter-spacing:-0.33px;">2024-10-06<br>19:10:49</div>
<div class="abs" style="left:1072px;top:541px;width:61px;text-align:center;font-size:14px;line-height:19px;color:#555;font-weight:400;white-space:nowrap;">已開獎</div>
<div class="abs" style="left:1133px;top:541px;width:62px;text-align:center;font-size:14px;line-height:19px;color:#555;font-weight:400;white-space:nowrap;">有效</div>
<div class="abs" style="left:241px;top:598px;width:546px;text-align:center;font-size:14px;line-height:19px;color:#555;font-weight:400;white-space:nowrap;">當前頁統計</div>
<div class="abs" style="left:787px;top:596.5px;width:56px;text-align:center;font-size:15.3px;line-height:19px;color:#555;font-weight:400;white-space:nowrap;letter-spacing:-0.33px;">35.00</div>
<div class="abs" style="left:843px;top:596.5px;width:54px;text-align:center;font-size:15.3px;line-height:19px;color:#555;font-weight:400;white-space:nowrap;letter-spacing:-0.33px;">-7.20</div>
<div class="abs" style="left:241px;top:637px;width:546px;text-align:center;font-size:14px;line-height:19px;color:#555;font-weight:400;white-space:nowrap;">總統計</div>
<div class="abs" style="left:787px;top:635px;width:56px;text-align:center;font-size:15.3px;line-height:19px;color:#555;font-weight:400;white-space:nowrap;letter-spacing:-0.33px;">35.00</div>
<div class="abs" style="left:843px;top:635px;width:54px;text-align:center;font-size:15.3px;line-height:19px;color:#555;font-weight:400;white-space:nowrap;letter-spacing:-0.33px;">-7.20</div>
<div class="abs" style="left:241px;top:673px;width:955px;height:53px;background:#f5f6f8;border:1px solid #d3d7dc;border-radius:4px"></div>
<div class="abs" style="left:252px;top:690px;font-size:14px;line-height:18px;color:#555;font-weight:400;white-space:nowrap;">每頁顯示20條</div>
<div class="abs" style="left:873px;top:695px;font-size:14px;line-height:18px;color:#555;font-weight:400;white-space:nowrap;">共5条</div>
<div class="abs" style="left:919px;top:695px;font-size:14px;line-height:18px;color:#3a6fd8;font-weight:400;white-space:nowrap;">首页</div>
<div class="abs" style="left:955px;top:695px;font-size:14px;line-height:18px;color:#3a6fd8;font-weight:400;white-space:nowrap;">上一页</div>
<div class="abs" style="left:1005px;top:694px;width:17px;height:19px;background:#abadbd"></div>
<div class="abs" style="left:1006px;top:695px;font-size:14px;line-height:18px;color:#3a6fd8;font-weight:400;white-space:nowrap;">[1]</div>
<div class="abs" style="left:1031px;top:695px;font-size:14px;line-height:18px;color:#3a6fd8;font-weight:400;white-space:nowrap;">下一页</div>
<div class="abs" style="left:1076px;top:695px;font-size:14px;line-height:18px;color:#555;font-weight:400;white-space:nowrap;">第</div>
<div class="abs" style="left:1096px;top:694px;width:30px;height:22px;background:#fff;border:1px solid #3d7be0;border-radius:2px"></div>
<div class="abs" style="left:1131px;top:695px;font-size:14px;line-height:18px;color:#555;font-weight:400;white-space:nowrap;">页</div>
<div class="abs" style="left:1149px;top:695px;font-size:14px;line-height:18px;color:#3a6fd8;font-weight:400;white-space:nowrap;">跳转</div>
<!--/CONTENT-->
<div id="bottom" class="abs"></div>
</body></html>
